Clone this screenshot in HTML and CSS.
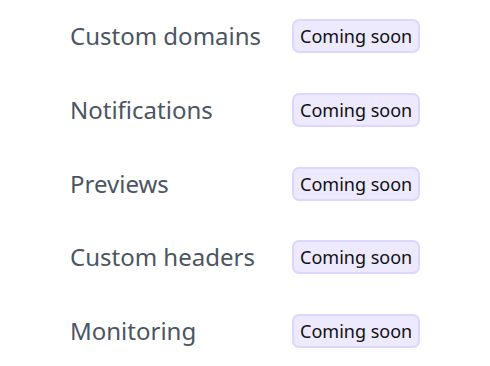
FILE: index.html
```html
<!DOCTYPE html>
<html>
<head>
<meta charset="utf-8">
<link rel="stylesheet" href="styles.css">
</head>
<body>
<div class="list">
  <div class="label">Custom domains</div><div><span class="badge">Coming soon</span></div>
  <div class="label">Notifications</div><div><span class="badge">Coming soon</span></div>
  <div class="label">Previews</div><div><span class="badge">Coming soon</span></div>
  <div class="label">Custom headers</div><div><span class="badge">Coming soon</span></div>
  <div class="label">Monitoring</div><div><span class="badge">Coming soon</span></div>
</div>
</body>
</html>
```
FILE: styles.css
```css
html, body { margin: 0; padding: 0; background: #ffffff; }
body { font-family: "Noto Sans", sans-serif; }
.list {
  display: grid;
  grid-template-columns: auto auto;
  justify-content: start;
  align-items: center;
  column-gap: 31px;
  row-gap: 39.75px;
  padding: 19px 0 0 70px;
}
.label {
  font-size: 24px;
  color: #4b5563;
  line-height: 34px;
}
.badge {
  display: block;
  width: max-content;
  font-size: 18px;
  line-height: 24px;
  color: #111111;
  background: #ede9fe;
  border: 2px solid #ddd6fe;
  border-radius: 7px;
  padding: 3px 6px;
}
```
